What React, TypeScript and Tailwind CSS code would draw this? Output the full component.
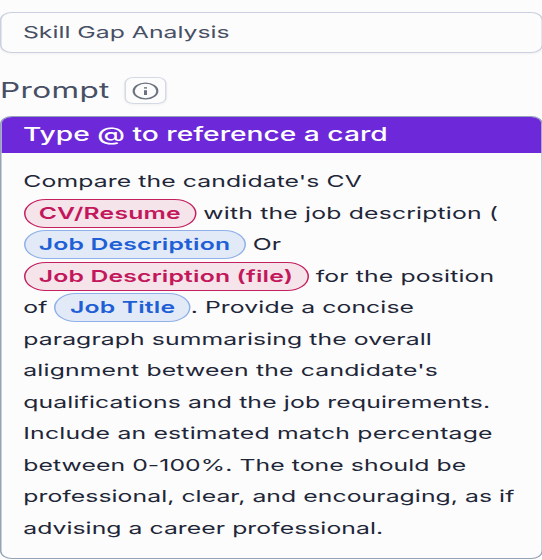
import type { ReactNode } from "react";

function Chip({ tone, children }: { tone: "pink" | "blue"; children: ReactNode }) {
  const color =
    tone === "pink"
      ? "border-[#c4205f] bg-[#f6e4eb] text-[#c2185b]"
      : "border-[#8fb0e8] bg-[#e3eaf7] text-[#1f5fd6]";
  return (
    <span className={`inline-flex h-[29px] items-center rounded-full border pl-[9.3px] pr-[9.3px] font-semibold tracking-[0.11px] ${color}`}>
      {children}
    </span>
  );
}

function Line({ className = "tracking-[0.06px]", children }: { className?: string; children: ReactNode }) {
  return <div className={`flex h-[31.5px] items-center whitespace-pre ${className}`}>{children}</div>;
}

export default function App() {
  return (
    <div className="h-[560px] w-[542px] overflow-hidden bg-[#fcfcfc]">
      <div
        className="h-[560px] w-[362px] origin-top-left scale-x-150 pt-3 text-[16.5px] text-[#1e2638]"
        style={{ fontFamily: 'Inter, "Liberation Sans", sans-serif' }}
      >
        <div className="flex h-[41px] items-center rounded-lg border border-[#cbd0de] px-[14.3px] text-[#474f65] shadow-xs">
          Skill Gap Analysis
        </div>
        <div className="mt-[24px] flex h-[27px] items-center">
          <span className="w-[82.5px] text-[21px] tracking-[0.25px] text-[#474f65]">Prompt</span>
          <span className="flex h-[27px] w-[28.7px] items-center justify-center rounded-md border border-[#d5d9e4] shadow-xs">
            <svg width="18" height="18" viewBox="0 0 18 18" fill="none" stroke="#6b7280">
              <circle cx="9" cy="9" r="7.9" strokeWidth="1.4" />
              <path d="M9 8.2V13" strokeWidth="2" />
              <path d="M9 5.2V6.6" strokeWidth="2" />
            </svg>
          </span>
        </div>
        <div className="mt-[12px] h-[443px] overflow-hidden rounded-lg border border-[#94a3b8]">
          <div className="flex h-[36px] items-center bg-[#6d28d9] pl-[14.3px] text-[18.8px] font-medium text-white">
            Type @ to reference a card
          </div>
          <div className="pl-[14.5px] pt-[13px]">
            <Line className="tracking-[0.07px]">Compare the candidate's CV</Line>
            <Line className="tracking-[0.12px]"><Chip tone="pink">CV/Resume</Chip> with the job description (</Line>
            <Line><Chip tone="blue">Job Description</Chip> Or</Line>
            <Line className="tracking-[0.1px]"><Chip tone="pink">Job Description (file)</Chip> for the position</Line>
            <Line>of <Chip tone="blue">Job Title</Chip>. Provide a concise</Line>
            <Line className="tracking-[0.06px]">paragraph summarising the overall</Line>
            <Line className="tracking-[0.11px]">alignment between the candidate's</Line>
            <Line className="tracking-[0.09px]">qualifications and the job requirements.</Line>
            <Line className="tracking-[0.13px]">Include an estimated match percentage</Line>
            <Line className="tracking-[0.05px]">between 0-100%. The tone should be</Line>
            <Line className="tracking-[0.04px]">professional, clear, and encouraging, as if</Line>
            <Line className="tracking-[0.03px]">advising a career professional.</Line>
          </div>
        </div>
      </div>
    </div>
  );
}
